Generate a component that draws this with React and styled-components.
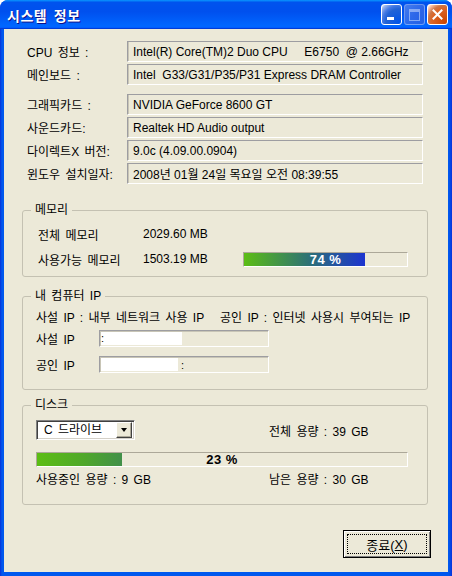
import React from 'react';
import styled, { createGlobalStyle } from 'styled-components';

const GlobalStyle = createGlobalStyle`
    html, body {
        margin: 0;
        padding: 0;
        background: #ffffff;
    }
    body {
        font-family: 'Liberation Sans', 'Noto Sans CJK KR', sans-serif;
        font-size: 12px;
        color: #000000;
    }
`;

const Window = styled.div`
    width: 452px;
    height: 576px;
    display: flex;
    flex-direction: column;
    background: linear-gradient(to right, #0831d9 0, #0058ee 2px, #0058ee 449px, #0831d9 452px);
    border-radius: 8px 8px 0 0;
    overflow: hidden;
    box-sizing: border-box;
`;

const TitleBar = styled.div`
    height: 29px;
    flex: none;
    display: flex;
    align-items: center;
    justify-content: space-between;
    padding: 0 4px 0 7px;
    background: linear-gradient(to bottom, #0997ff 0%, #0053ee 8%, #0050ee 40%, #0066ff 88%, #0066ff 93%, #005bff 95%, #003dd7 96%, #003dd7 100%);
    box-sizing: border-box;
`;

const Title = styled.div`
    font-family: 'Noto Sans CJK KR', sans-serif;
    font-weight: 700;
    font-size: 14px;
    color: #ffffff;
    text-shadow: 1px 1px #0f1089;
    letter-spacing: 0.5px;
    word-spacing: 3px;
`;

const TitleButtons = styled.div`
    display: flex;
    gap: 2px;
`;

const TitleButton = styled.div`
    width: 21px;
    height: 21px;
    box-sizing: border-box;
    border: 1px solid ${p => (p.$kind === 'max' ? 'rgba(255,255,255,0.45)' : '#ffffff')};
    border-radius: 3px;
    display: flex;
    align-items: center;
    justify-content: center;
    position: relative;
    background: ${p =>
        p.$kind === 'close'
            ? 'radial-gradient(circle at 90% 90%, #cc4600 0%, #dc6527 55%, #cd7546 70%, #ffccb2 90%, #fff 100%)'
            : p.$kind === 'max'
            ? 'linear-gradient(135deg, #5b8cf0 0%, #3d6fe6 50%, #2f5fdc 100%)'
            : 'radial-gradient(circle at 90% 90%, #0054e9 0%, #2263d5 55%, #4479e4 70%, #a3bbec 90%, #fff 100%)'};
    opacity: ${p => (p.$kind === 'max' ? 0.75 : 1)};
`;

const MinGlyph = styled.span`
    position: absolute;
    left: 5px;
    bottom: 4px;
    width: 7px;
    height: 3px;
    background: #ffffff;
`;

const MaxGlyph = styled.span`
    width: 9px;
    height: 8px;
    border: 1px solid rgba(255,255,255,0.6);
    border-top-width: 3px;
`;

const Client = styled.div`
    flex: 1;
    margin: 0 4px 4px;
    background: #ece9d8;
    padding: 12px 20px 0 18px;
    display: flex;
    flex-direction: column;
`;

const InfoGrid = styled.div`
    display: grid;
    grid-template-columns: 100px 296px;
    grid-auto-rows: 21px;
    row-gap: 2px;
    padding: 0 5px;
    margin-top: ${p => p.$top || 0}px;
    align-items: center;
`;

const InfoLabel = styled.div`
    white-space: pre;
    word-spacing: 2px;
`;

const InfoBox = styled.div`
    height: 21px;
    box-sizing: border-box;
    border: 1px solid;
    border-color: #9d9da1 #ffffff #ffffff #9d9da1;
    box-shadow: inset 1px 0 #c8c5b6;
    padding: 0 5px;
    display: flex;
    align-items: center;
    white-space: pre;
`;

const Group = styled.fieldset`
    margin: ${p => p.$top}px 0 0;
    padding: 0;
    min-width: 0;
    border: 1px solid #c4c1b2;
    border-radius: 3px;
`;

const Legend = styled.legend`
    margin-left: 8px;
    padding: 0 4px;
    line-height: 14px;
    word-spacing: 2px;
`;

const MemoryBody = styled.div`
    display: grid;
    grid-template-columns: 105px 100px 165px;
    grid-auto-rows: 20px;
    row-gap: 5px;
    align-items: center;
    padding: 7px 0 7px 15px;
`;

const Text = styled.span`
    white-space: pre;
    word-spacing: ${p => (p.$ko ? 2 : 0)}px;
`;

const Bar = styled.div`
    position: relative;
    width: ${p => p.$width}px;
    height: 15px;
    box-sizing: border-box;
    border: 1px solid;
    border-color: #aca899 #ffffff #ffffff #aca899;
    overflow: hidden;
`;

const Fill = styled.div`
    height: 100%;
    background: linear-gradient(to right, ${p => p.$from}, ${p => p.$mid} 55%, ${p => p.$to});
`;

const BarText = styled.span`
    position: absolute;
    inset: 0;
    display: flex;
    align-items: center;
    justify-content: center;
    font-weight: 700;
    font-size: 13px;
    color: ${p => p.$color};
    letter-spacing: 0.5px;
`;

const IpBody = styled.div`
    display: flex;
    flex-direction: column;
    padding: 3px 0 16px 13px;
`;

const IpNote = styled.div`
    height: 20px;
    display: flex;
    align-items: center;
    white-space: pre;
    word-spacing: 2px;
    margin-bottom: 4px;
`;

const IpGrid = styled.div`
    display: grid;
    grid-template-columns: 63px 170px;
    grid-auto-rows: 17px;
    row-gap: 9px;
    align-items: center;
`;

const IpBox = styled.div`
    height: 17px;
    box-sizing: border-box;
    border: 1px solid;
    border-color: #9d9da1 #ffffff #ffffff #9d9da1;
    box-shadow: inset 1px 1px #c8c5b6;
    display: flex;
    align-items: center;
    padding-left: 1px;
`;

const Mask = styled.span`
    width: ${p => p.$width}px;
    height: 13px;
    background: #ffffff;
    font-size: 11px;
    line-height: 13px;
`;

const Colon = styled.span`
    font-size: 11px;
    padding-left: 3px;
`;

const DiskBody = styled.div`
    padding: 8px 19px 16px 13px;
`;

const DiskRow = styled.div`
    display: grid;
    grid-template-columns: 233px 1fr;
    align-items: end;
    margin-top: ${p => p.$top || 0}px;
    line-height: 16px;
`;

const BarSlot = styled.div`
    margin-top: 12px;
`;

const Combo = styled.div`
    width: 99px;
    height: 20px;
    box-sizing: border-box;
    border: 1px solid;
    border-color: #808080 #ffffff #ffffff #808080;
    box-shadow: inset 1px 1px #404040, inset -1px -1px #d4d0c8;
    background: #ffffff;
    display: flex;
    align-items: center;
    justify-content: space-between;
    padding: 2px 2px 2px 7px;
    word-spacing: 2px;
`;

const ComboButton = styled.div`
    width: 16px;
    height: 16px;
    box-sizing: border-box;
    background: #ece9d8;
    border: 1px solid;
    border-color: #ffffff #404040 #404040 #ffffff;
    box-shadow: inset -1px -1px #aca899;
    display: flex;
    align-items: center;
    justify-content: center;
`;

const Arrow = styled.span`
    width: 0;
    height: 0;
    border-left: 3.5px solid transparent;
    border-right: 3.5px solid transparent;
    border-top: 4px solid #000000;
`;

const Footer = styled.div`
    display: flex;
    justify-content: flex-end;
    margin: 25px -3px 0 0;
`;

const Button = styled.button`
    width: 88px;
    height: 28px;
    box-sizing: border-box;
    padding: 3px;
    border: 1px solid #000000;
    background: #ece9d8;
    box-shadow: inset 1px 1px #ffffff, inset -1px -1px #808080;
    font-family: 'Liberation Sans', 'Noto Sans CJK KR', sans-serif;
    font-size: 13px;
    color: #000000;
    display: flex;
`;

const FocusRect = styled.span`
    flex: 1;
    border: 1px dotted #000000;
    display: flex;
    align-items: center;
    justify-content: center;

    u {
        text-decoration: underline;
    }
`;

const topInfo = [
    ['CPU 정보 :', 'Intel(R) Core(TM)2 Duo CPU     E6750  @ 2.66GHz'],
    ['메인보드 :', 'Intel  G33/G31/P35/P31 Express DRAM Controller'],
];

const moreInfo = [
    ['그래픽카드 :', 'NVIDIA GeForce 8600 GT'],
    ['사운드카드:', 'Realtek HD Audio output'],
    ['다이렉트X 버전:', '9.0c (4.09.00.0904)'],
    ['윈도우 설치일자:', '2008년 01월 24일 목요일 오전 08:39:55'],
];

function ProgressBar({ width, percent, from, mid, to, textColor }) {
    return (
        <Bar $width={width}>
            <Fill $from={from} $mid={mid} $to={to} style={{ width: `${percent}%` }} />
            <BarText $color={textColor}>{percent} %</BarText>
        </Bar>
    );
}

export default function App() {
    return (
        <>
            <GlobalStyle />
            <Window>
                <TitleBar>
                    <Title>시스템 정보</Title>
                    <TitleButtons>
                        <TitleButton $kind="min"><MinGlyph /></TitleButton>
                        <TitleButton $kind="max"><MaxGlyph /></TitleButton>
                        <TitleButton $kind="close">
                            <svg width="11" height="11" viewBox="0 0 11 11">
                                <path d="M1.5 1.5 L9.5 9.5 M9.5 1.5 L1.5 9.5" stroke="#ffffff" strokeWidth="2" strokeLinecap="square" />
                            </svg>
                        </TitleButton>
                    </TitleButtons>
                </TitleBar>

                <Client>
                    <InfoGrid>
                        {topInfo.map(([label, value]) => (
                            <React.Fragment key={label}>
                                <InfoLabel>{label}</InfoLabel>
                                <InfoBox>{value}</InfoBox>
                            </React.Fragment>
                        ))}
                    </InfoGrid>
                    <InfoGrid $top={9}>
                        {moreInfo.map(([label, value]) => (
                            <React.Fragment key={label}>
                                <InfoLabel>{label}</InfoLabel>
                                <InfoBox>{value}</InfoBox>
                            </React.Fragment>
                        ))}
                    </InfoGrid>

                    <Group $top={19}>
                        <Legend>메모리</Legend>
                        <MemoryBody>
                            <Text $ko>전체 메모리</Text>
                            <Text>2029.60 MB</Text>
                            <span />
                            <Text $ko>사용가능 메모리</Text>
                            <Text>1503.19 MB</Text>
                            <ProgressBar width={165} percent={74} from="#5cbd14" mid="#2c6f78" to="#1c34d0" textColor="#ffffff" />
                        </MemoryBody>
                    </Group>

                    <Group $top={12}>
                        <Legend>내 컴퓨터 IP</Legend>
                        <IpBody>
                            <IpNote>사설 IP : 내부 네트워크 사용 IP   공인 IP : 인터넷 사용시 부여되는 IP</IpNote>
                            <IpGrid>
                                <Text $ko>사설 IP</Text>
                                <IpBox><Mask $width={81}>:</Mask></IpBox>
                                <Text $ko>공인 IP</Text>
                                <IpBox><Mask $width={77} /><Colon>:</Colon></IpBox>
                            </IpGrid>
                        </IpBody>
                    </Group>

                    <Group $top={8}>
                        <Legend>디스크</Legend>
                        <DiskBody>
                            <DiskRow>
                                <Combo>
                                    <span>C 드라이브</span>
                                    <ComboButton><Arrow /></ComboButton>
                                </Combo>
                                <Text $ko>전체 용량 : 39 GB</Text>
                            </DiskRow>
                            <BarSlot>
                                <ProgressBar width={372} percent={23} from="#5cbd14" mid="#4fa82a" to="#42904a" textColor="#000000" />
                            </BarSlot>
                            <DiskRow $top={5}>
                                <Text $ko>사용중인 용량 : 9 GB</Text>
                                <Text $ko>남은 용량 : 30 GB</Text>
                            </DiskRow>
                        </DiskBody>
                    </Group>

                    <Footer>
                        <Button>
                            <FocusRect>종료(<u>X</u>)</FocusRect>
                        </Button>
                    </Footer>
                </Client>
            </Window>
        </>
    );
}
